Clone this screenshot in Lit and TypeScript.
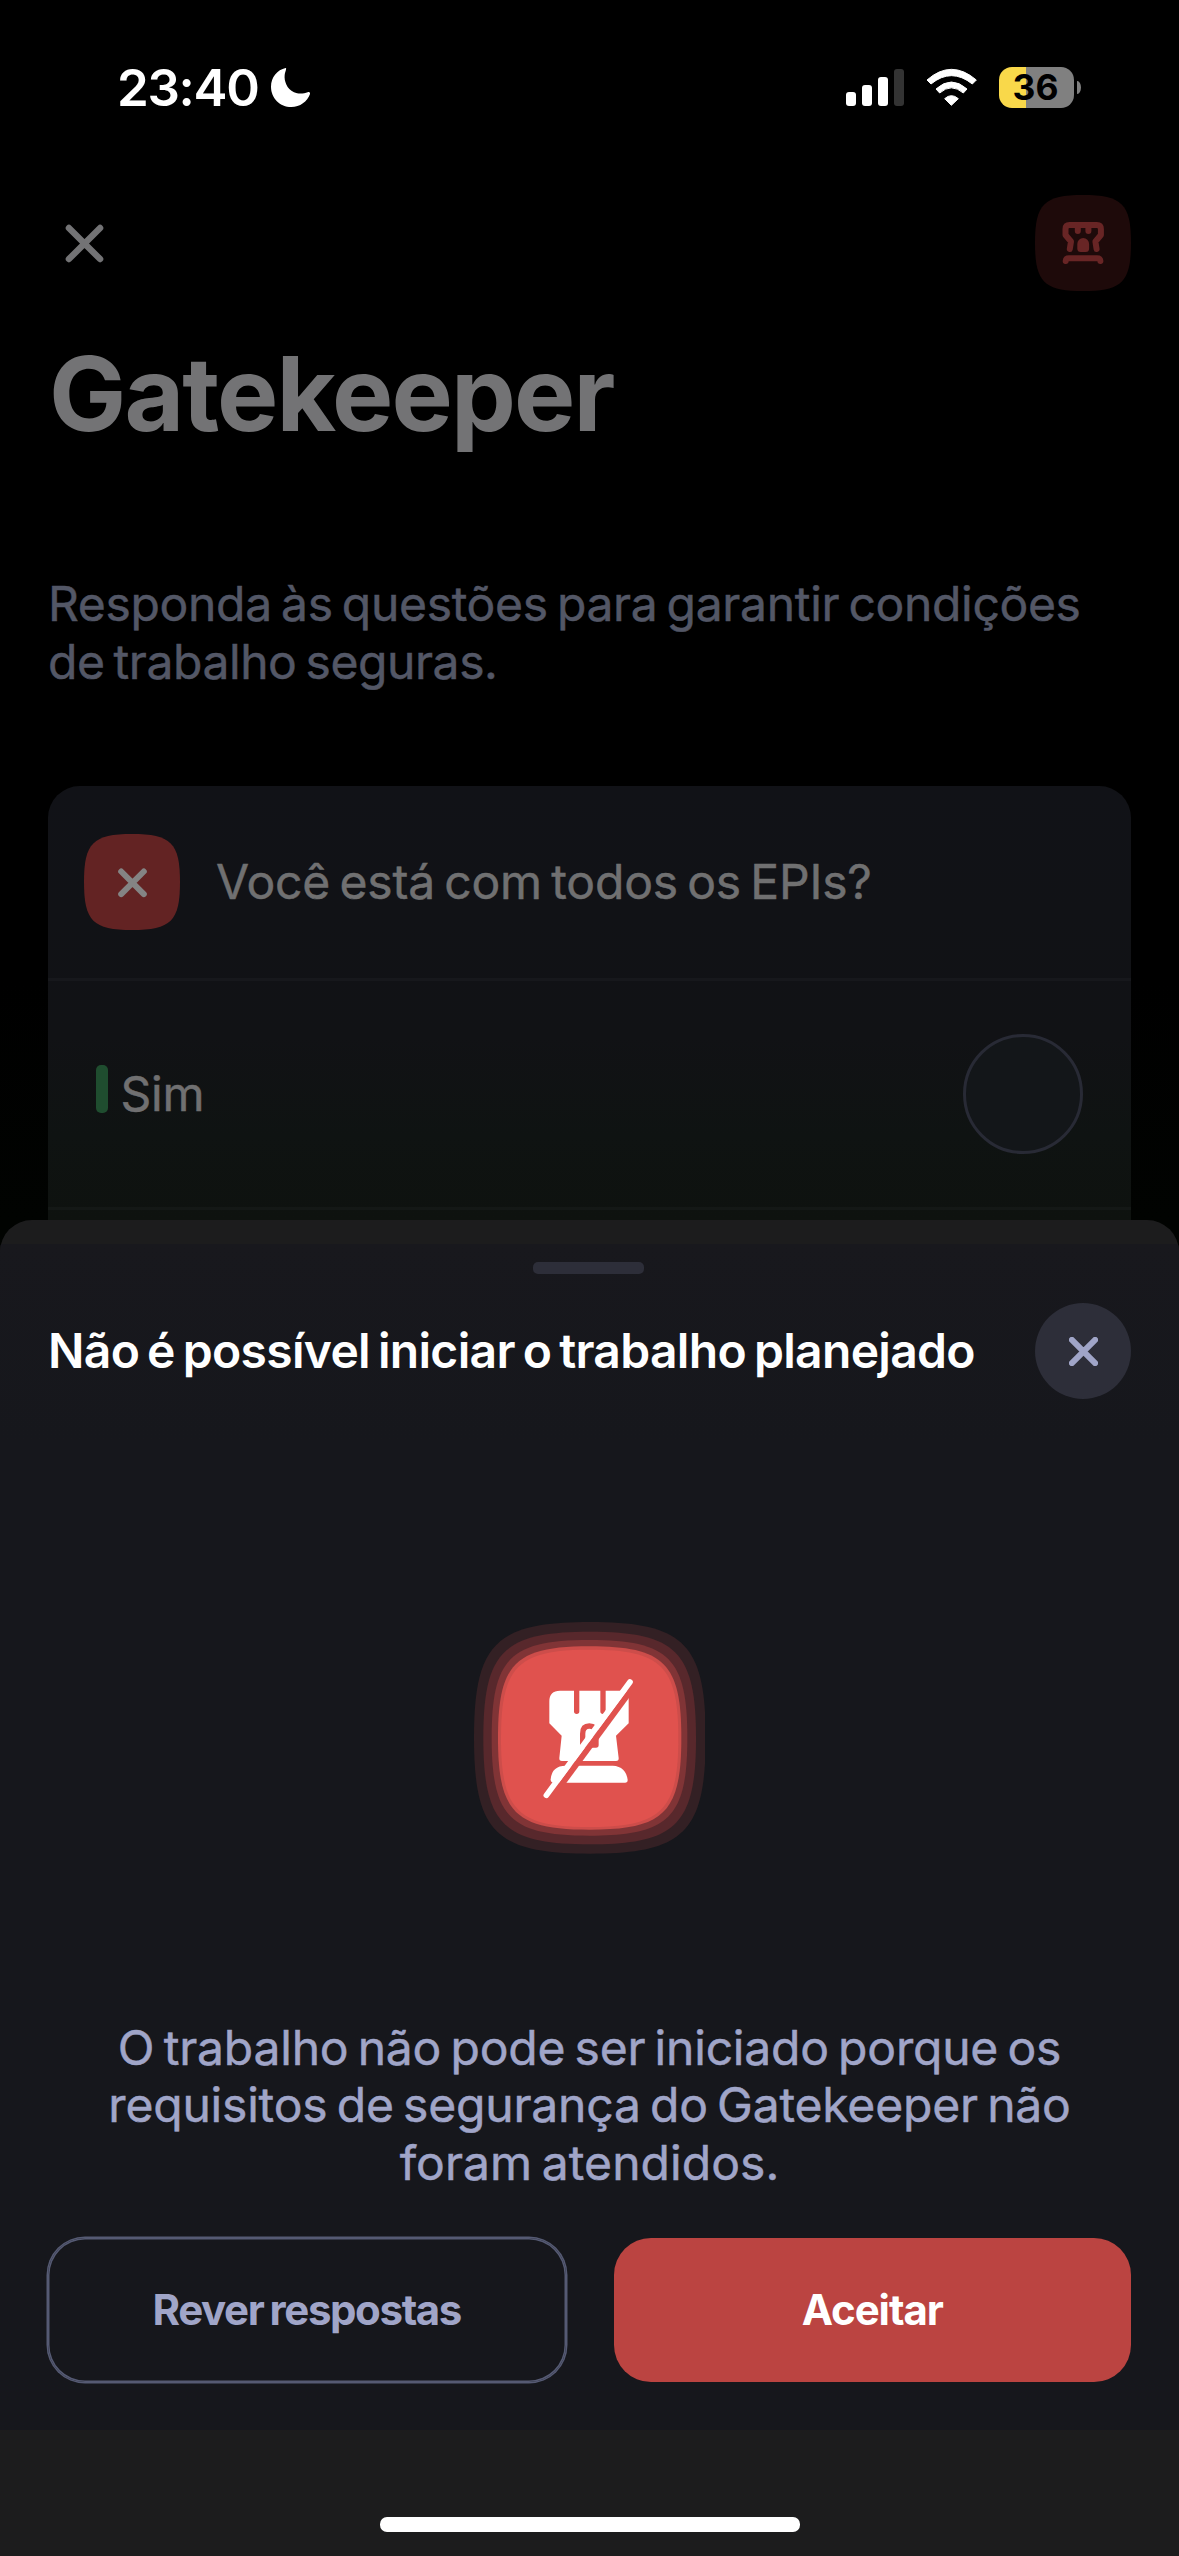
import { LitElement, html, css, svg } from "lit";
import { customElement } from "lit/decorators.js";

const cross = (cls: string, w: number) => html`
  <svg class=${cls} viewBox="0 0 30 30">
    <path d="M3 3L27 27M27 3L3 27" fill="none" stroke="currentColor" stroke-width=${w} stroke-linecap="round" />
  </svg>`;

const SQUIRCLE = "M0 48C0 9 9 0 48 0S96 9 96 48S87 96 48 96S0 87 0 48Z";

const ring = (x: number, y: number, size: number, fill: string) =>
  svg`<path transform="translate(${x} ${y}) scale(${size / 96})" d=${SQUIRCLE} fill=${fill} />`;

@customElement("status-bar")
class StatusBar extends LitElement {
  static styles = css`
    :host { display: flex; justify-content: space-between; align-items: flex-start; box-sizing: border-box;
      height: 195px; padding: 67px 98px 0 117px; font-family: Inter, sans-serif; }
    .clock { display: flex; align-items: flex-start; color: #fff; }
    .time { font-size: 51px; font-weight: 600; line-height: 42px; letter-spacing: -1.3px; width: 154px; white-space: nowrap; }
    .moon { width: 40px; height: 41px; }
    .signals { display: flex; align-items: flex-start; }
    .cell { width: 58px; height: 41px; }
    .wifi { width: 52px; height: 41px; margin-left: 22px; }
    .battery { display: flex; align-items: center; margin-left: 21px; }
    .level { width: 75px; height: 41px; border-radius: 13px; box-sizing: border-box;
      background: linear-gradient(90deg, #f9d84a 27px, #808080 27px);
      color: #000; font-size: 35.5px; font-weight: 700; line-height: 42px; text-align: center; padding-right: 2px; }
    .nub { width: 4px; height: 13px; margin-left: 3px; background: #808080; border-radius: 0 4px 4px 0 / 0 7px 7px 0; }
  `;
  render() {
    return html`
      <div class="clock">
        <span class="time">23:40</span>
        <svg class="moon" viewBox="573 84 120 123"><path fill="#fff" d="M617 87C592 92 573 115 573 143C573 177 600 204 634 204C660 204 682 188 690 165C691 161 688 158 683 160C672 164 655 166 642 160C620 150 612 125 614 108C615 100 617 96 618 92C619 88 618 87 617 87Z" /></svg>
      </div>
      <div class="signals">
        <svg class="cell" viewBox="0 0 58 41">
          <rect x="0" y="25" width="10" height="14" rx="3" fill="#fff" />
          <rect x="16" y="18" width="10" height="21" rx="3" fill="#fff" />
          <rect x="32" y="10" width="10" height="29" rx="3" fill="#fff" />
          <rect x="48" y="2" width="10" height="37" rx="3" fill="#333" />
        </svg>
        <svg class="wifi" viewBox="318 81 156 123">
          <g fill="#fff" stroke="#fff" stroke-width="3" stroke-linejoin="round">
            <path d="M394 196L374 176Q394 158 415 176Z" />
            <path d="M348 147Q394 105 441 147L430 159Q394 128 359 159Z" />
            <path d="M321 120Q394 56 469 120L457 132Q394 82 333 132Z" />
          </g>
        </svg>
        <div class="battery"><div class="level">36</div><div class="nub"></div></div>
      </div>`;
  }
}

@customElement("gate-form")
class GateForm extends LitElement {
  static styles = css`
    :host { display: flex; flex-direction: column; padding: 0 48px; flex: 1; }
    .nav { display: flex; justify-content: space-between; align-items: center; height: 96px; }
    .close { width: 39px; height: 39px; margin-left: 17px; color: #737375; }
    .badge { width: 96px; height: 96px; }
    h1 { margin: 43px 0 0 1px; font-size: 103px; line-height: 120px; font-weight: 700; color: #737375; white-space: nowrap; letter-spacing: -1.900px; }
    .intro { margin: 121px 0 0; font-size: 48px; line-height: 58px; font-weight: 400; color: #535766; white-space: nowrap; word-spacing: -4px; -webkit-text-stroke: 0.5px #535766; }
    .l1 { letter-spacing: -0.320px; }
    .l2 { letter-spacing: -0.430px; }
    .card { display: flex; flex-direction: column; flex: 1; margin-top: 95px; border-radius: 32px 32px 0 0;
      background: linear-gradient(180deg, #111217 0, #111215 250px, #0f1312 350px, #0e120f 434px); }
    .head { display: flex; align-items: center; height: 192px; padding-left: 36px; gap: 36px; border-bottom: 3px solid #17181c; }
    .label { font-size: 48px; line-height: 58px; font-weight: 400; color: #707071; white-space: nowrap; word-spacing: -4px; letter-spacing: -0.180px; -webkit-text-stroke: 0.5px #707071; }
    .option { display: flex; align-items: center; height: 226px; padding: 0 48px; border-bottom: 3px solid #141816; }
    .bar { width: 12px; height: 48px; border-radius: 5px; background: #1f4d2f; margin-bottom: 10px; }
    .name { flex: 1; margin-left: 12.500px; }
    .radio { width: 120px; height: 120px; border-radius: 50%; border: 3px solid #282a35; box-sizing: border-box; background: #131619; }
  `;
  render() {
    return html`
      <div class="nav">
        ${cross("close", 4.9)}
        <svg class="badge" viewBox="0 0 96 96">
          <path d=${SQUIRCLE} fill="#1e0a0a" />
          <g fill="none" stroke="#682525" stroke-width="6" stroke-linecap="round" stroke-linejoin="round">
            <path d="M34.8 54L36 46.5L30.5 40V34Q30.5 30 34.5 30H61.9Q65.9 30 65.9 34V40L60.4 46.5L61.6 54M42.8 31V36M53.4 31V36" />
            <path d="M30.7 66Q31 63.2 34 63.2H62Q65.2 63.2 65.4 66" />
          </g>
          <path d="M42.3 49a5.9 5.9 0 0 1 11.8 0v4.500q0 3.500-3.500 3.500h-4.800q-3.500 0-3.500-3.500z" fill="#682525" />
        </svg>
      </div>
      <h1>Gatekeeper</h1>
      <p class="intro"><span class="l1">Responda às questões para garantir condições</span><br /><span class="l2">de trabalho seguras.</span></p>
      <div class="card">
        <div class="head">
          <svg class="badge" viewBox="0 0 96 96">
            <path d=${SQUIRCLE} fill="#632323" />
            <path d="M37.200 37.500L59.800 60.100M59.800 37.500L37.200 60.100" stroke="#848484" stroke-width="6" stroke-linecap="round" />
          </svg>
          <span class="label">Você está com todos os EPIs?</span>
        </div>
        <div class="option">
          <div class="bar"></div>
          <span class="label name">Sim</span>
          <div class="radio"></div>
        </div>
      </div>`;
  }
}

@customElement("block-sheet")
class BlockSheet extends LitElement {
  static styles = css`
    :host { display: flex; flex-direction: column; box-sizing: border-box; padding-top: 24px; border-radius: 32px 32px 0 0;
      overflow: hidden; background: #1c1c1d; }
    .panel { display: flex; flex-direction: column; align-items: center; box-sizing: border-box; height: 1186px; padding: 18px 48px 0;
      background: linear-gradient(180deg, #18181d, #16171c 200px); }
    .handle { width: 111px; height: 12px; border-radius: 5px; background: #2d2e39; flex: none; margin-right: 2px; }
    header { display: flex; justify-content: space-between; align-items: center; align-self: stretch; height: 96px; margin-top: 29px; }
    h2 { margin: 0; font-size: 48px; line-height: 58px; font-weight: 600; color: #fff; white-space: nowrap; word-spacing: -3.500px; letter-spacing: -0.680px; }
    .close { display: flex; align-items: center; justify-content: center; width: 96px; height: 96px; border-radius: 50%; background: #2d2e39; color: #a0a5c8; }
    .x { width: 29px; height: 29px; }
    .art { width: 231px; height: 232px; margin-top: 223px; flex: none; }
    .msg { margin: 164.500px 0 0; text-align: center; font-size: 48px; line-height: 57.500px; font-weight: 400; color: #a0a5c8; white-space: nowrap; word-spacing: -4px; -webkit-text-stroke: 0.5px #a0a5c8; }
    .m1 { letter-spacing: -0.200px; }
    .m2 { letter-spacing: -0.190px; }
    .m3 { letter-spacing: 0.070px; }
    .actions { display: flex; gap: 48px; align-self: stretch; margin-top: 47px; }
    .btn { flex: 1; height: 144px; border-radius: 37px; display: flex; align-items: center; justify-content: center;
      font-size: 42px; font-weight: 700; white-space: nowrap; word-spacing: -2.500px; padding-bottom: 1px; box-sizing: border-box; }
    .ghost { color: #a0a5c8; letter-spacing: -1.380px; box-shadow: inset 0 0 0 1.500px #555a73, 0 0 0 1.500px #555a73; }
    .accept { color: #fff; background: #bb4441; letter-spacing: -1.100px; }
    .home { width: 420px; height: 15px; border-radius: 7px; background: #fff; margin: 87px auto 0; }
  `;
  render() {
    return html`
      <div class="panel">
        <div class="handle"></div>
        <header>
          <h2>Não é possível iniciar o trabalho planejado</h2>
          <div class="close">${cross("x", 6.2)}</div>
        </header>
        <svg class="art" viewBox="42 36 693 696">
          ${ring(42, 36, 695, "#332024")}
          ${ring(70, 65, 638, "#58282c")}
          ${ring(95, 90, 587, "#803436")}
          ${ring(114, 109, 550, "#cd4d4a")}
          ${ring(123, 119, 532, "#e0524e")}
          <path fill="#fff" d="M268 274Q268 242 300 242H342V304a8 8 0 0 0 16 0V242H421V304a8 8 0 0 0 16 0V242H506V340L468 377L476 444Q477 453 468 453H306Q297 453 298 444L305 377L268 340Z" />
          <path fill="none" stroke="#e0524e" stroke-width="16" stroke-linejoin="round" d="M368 405V371Q368 348 388 348Q408 348 408 371V405Z" />
          <path fill="#fff" d="M280 518Q272 518 272 508Q275 467 318 467H458Q498 469 503 510Q503 518 495 518Z" />
          <path stroke="#e0524e" stroke-width="18" d="M273 566L524 226" />
          <path stroke="#fff" stroke-width="17" stroke-linecap="round" d="M259 556L510 216" />
        </svg>
        <p class="msg"><span class="m1">O trabalho não pode ser iniciado porque os</span><br /><span class="m2">requisitos de segurança do Gatekeeper não</span><br /><span class="m3">foram atendidos.</span></p>
        <div class="actions">
          <div class="btn ghost">Rever respostas</div>
          <div class="btn accept">Aceitar</div>
        </div>
      </div>
      <div class="home"></div>`;
  }
}

@customElement("app-root")
class AppRoot extends LitElement {
  static styles = css`
    :host { display: block; position: relative; width: 1179px; height: 2556px; overflow: hidden; background: #000; font-family: Inter, sans-serif; }
    .screen { display: flex; flex-direction: column; height: 1300px; background: linear-gradient(180deg, #000 980px, #010301 1220px); }
    block-sheet { position: absolute; left: 0; right: 0; top: 1220px; bottom: 0; }
  `;
  render() {
    return html`
      <div class="screen"><status-bar></status-bar><gate-form></gate-form></div>
      <block-sheet></block-sheet>`;
  }
}
